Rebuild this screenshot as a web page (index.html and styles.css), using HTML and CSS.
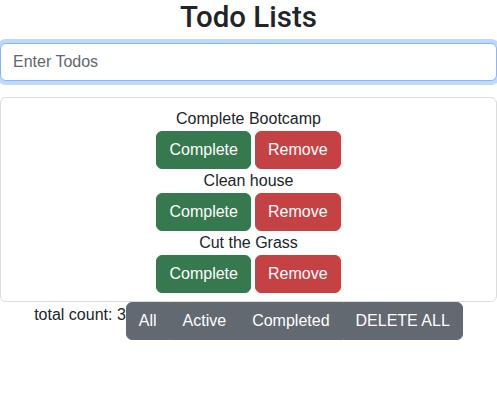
FILE: index.html
```html
<!DOCTYPE html>
<html lang="en">
<head>
<meta charset="utf-8">
<title>Todo Lists</title>
<link rel="stylesheet" href="styles.css">
</head>
<body>
<div class="app">
  <h1 class="title">Todo Lists</h1>
  <form class="entry">
    <input class="entry-input" type="text" placeholder="Enter Todos">
  </form>
  <div class="card">
    <div class="item">
      <div class="item-name">Complete Bootcamp</div>
      <div class="item-actions">
        <button class="btn btn-success" type="button">Complete</button>
        <button class="btn btn-danger" type="button">Remove</button>
      </div>
    </div>
    <div class="item">
      <div class="item-name">Clean house</div>
      <div class="item-actions">
        <button class="btn btn-success" type="button">Complete</button>
        <button class="btn btn-danger" type="button">Remove</button>
      </div>
    </div>
    <div class="item">
      <div class="item-name">Cut the Grass</div>
      <div class="item-actions">
        <button class="btn btn-success" type="button">Complete</button>
        <button class="btn btn-danger" type="button">Remove</button>
      </div>
    </div>
  </div>
  <div class="footer">
    <span class="count">total count: 3</span>
    <div class="btn-group">
      <button class="btn btn-secondary" type="button">All</button>
      <button class="btn btn-secondary" type="button">Active</button>
      <button class="btn btn-secondary" type="button">Completed</button>
      <button class="btn btn-secondary" type="button">DELETE ALL</button>
    </div>
  </div>
</div>
</body>
</html>
```
FILE: styles.css
```css
* { box-sizing: border-box; }
html, body { margin: 0; padding: 0; background: #fff; }
body {
  font-family: "Liberation Sans", Arial, sans-serif;
  font-size: 16px;
  line-height: 24px;
  color: #212529;
}
.app { width: 497px; }
.title {
  margin: 0 0 8px;
  font-family: Roboto, "Liberation Sans", sans-serif;
  font-size: 29.45px;
  line-height: 35px;
  font-weight: 500;
  text-align: center;
  color: #212529;
}
.entry { margin: 0 0 16px; }
.entry-input {
  display: block;
  width: 100%;
  height: 38px;
  margin: 0;
  padding: 6px 12px;
  font: inherit;
  color: #212529;
  background: #fff;
  border: 1px solid #86b7fe;
  border-radius: 6px;
  box-shadow: 0 0 0 4px rgba(13, 110, 253, 0.27);
  outline: none;
}
.entry-input::placeholder { color: #62676e; opacity: 1; }
.card {
  border: 1px solid #dcdcdc;
  border-radius: 6px;
  padding: 9px 8px 8px;
}
.item { text-align: center; }
.item-name { line-height: 24px; }
.item-actions { display: flex; justify-content: center; gap: 4px; }
.btn {
  display: inline-block;
  height: 38px;
  padding: 6px 12px;
  font: inherit;
  line-height: 24px;
  color: #fff;
  border: 1px solid transparent;
  border-radius: 6px;
  cursor: pointer;
}
.btn-success { background: #36794f; border-color: #36794f; }
.btn-danger { background: #c54244; border-color: #c54244; }
.btn-secondary { background: #636971; border-color: #636971; }
.footer {
  display: flex;
  justify-content: center;
  align-items: flex-start;
}
.count { line-height: 24px; padding-top: 1px; }
.btn-group { display: inline-flex; }
.btn-group .btn { border-radius: 0; }
.btn-group .btn:first-child { border-radius: 6px 0 0 6px; }
.btn-group .btn:last-child { border-radius: 0 6px 6px 0; }
```
